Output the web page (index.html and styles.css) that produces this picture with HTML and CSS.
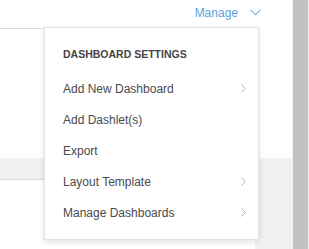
FILE: index.html
```html
<!DOCTYPE html>
<html lang="en">

<head>
    <meta charset="UTF-8">
    <meta name="viewport" content="width=device-width, initial-scale=1.0">
    <title>Dashboard</title>
    <link rel="stylesheet" href="styles.css">
</head>

<body>
    <div class="page">
        <div class="main">
            <div class="top">
                <div class="toolbar">
                    <span class="manage">Manage</span>
                    <svg class="caret" width="11" height="7" viewBox="0 0 11 7">
                        <path d="M0.5 0.8 L5.5 5.8 L10.5 0.8" fill="none" stroke="#6fb3e4" stroke-width="1.1"/>
                    </svg>
                </div>
                <div class="card card-top"></div>
            </div>
            <div class="card card-bottom"></div>

            <div class="menu">
                <h3>Dashboard Settings</h3>
                <ul>
                    <li>Add New Dashboard <svg class="arrow" width="5" height="9" viewBox="0 0 5 9"><path d="M0.5 0.5 L4.3 4.5 L0.5 8.5" fill="none" stroke="#a9b6c8" stroke-width="1"/></svg></li>
                    <li>Add Dashlet(s)</li>
                    <li>Export</li>
                    <li>Layout Template <svg class="arrow" width="5" height="9" viewBox="0 0 5 9"><path d="M0.5 0.5 L4.3 4.5 L0.5 8.5" fill="none" stroke="#b8b2b0" stroke-width="1"/></svg></li>
                    <li>Manage Dashboards <svg class="arrow" width="5" height="9" viewBox="0 0 5 9"><path d="M0.5 0.5 L4.3 4.5 L0.5 8.5" fill="none" stroke="#a9b6c8" stroke-width="1"/></svg></li>
                </ul>
            </div>
        </div>
        <div class="scrollbar">
            <div class="thumb"></div>
        </div>
    </div>
</body>

</html>
```

FILE: styles.css
```css
* {
    margin: 0;
    padding: 0;
    box-sizing: border-box;
}

body {
    font-family: 'Liberation Sans', Arial, sans-serif;
    background-color: #f0f1f3;
    height: 100vh;
    overflow: hidden;
}

.page {
    display: flex;
    height: 100%;
}

.main {
    position: relative;
    flex: 1;
}

.top {
    background-color: #fff;
    height: 158px;
}

.toolbar {
    height: 28px;
    display: flex;
    justify-content: flex-end;
    align-items: flex-start;
    padding: 6px 31px 0 0;
    gap: 12px;
}

.manage {
    font-size: 12px;
    color: #5aa5dc;
    line-height: 14px;
}

.caret {
    margin-top: 3px;
}

.card {
    background-color: #fff;
    border-top: 1px solid #dcdcdc;
    width: 255px;
}

.card-top {
    height: 130px;
}

.card-bottom {
    margin-top: 21px;
    height: 70px;
}

.menu {
    position: absolute;
    top: 27px;
    left: 44px;
    width: 215px;
    height: 213px;
    background-color: #fff;
    border: 1px solid #e2e2e2;
    box-shadow: 0 2px 6px rgba(0, 0, 0, 0.12);
    padding: 19px 12px 0 18px;
}

.menu h3 {
    font-size: 10.5px;
    font-weight: bold;
    text-transform: uppercase;
    color: #444;
    line-height: 14px;
    margin-bottom: 12px;
}

.menu ul {
    list-style: none;
}

.menu li {
    height: 31px;
    display: flex;
    align-items: center;
    justify-content: space-between;
    font-size: 12px;
    color: #4a4a4a;
}

.scrollbar {
    width: 17px;
    background-color: #f1f1f1;
    padding: 0 1px;
}

.thumb {
    background-color: #c1c1c1;
    height: 100%;
}
```
